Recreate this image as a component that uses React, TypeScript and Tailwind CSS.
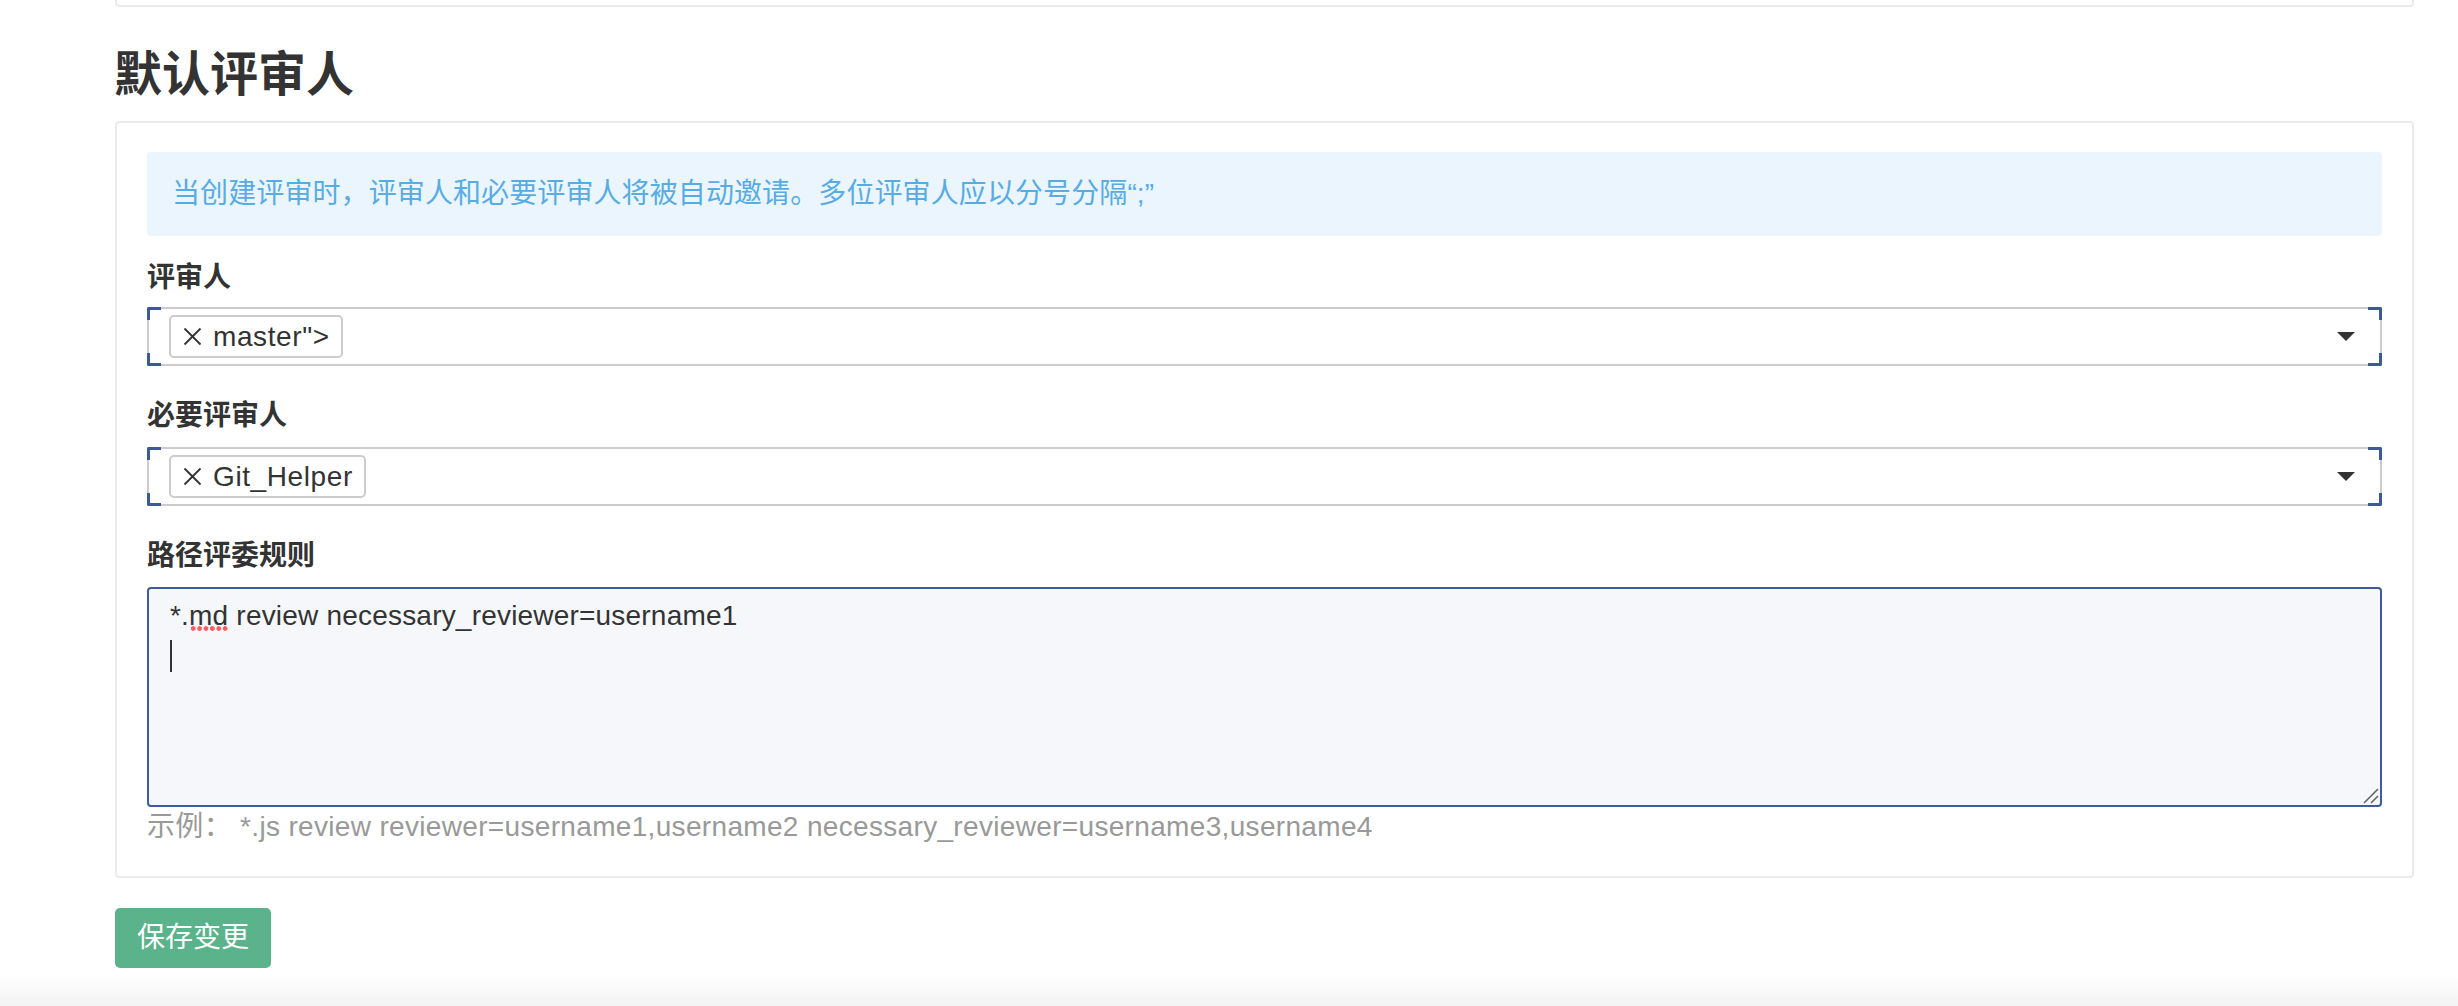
import React from 'react';

const Corners: React.FC = () => (
  <>
    <span className="absolute -left-[2px] -top-[2px] w-[14px] h-[13px] border-l-[3px] border-t-[3px] border-[#3d5a98] rounded-tl-[2px]" />
    <span className="absolute -left-[2px] -bottom-[2px] w-[14px] h-[13px] border-l-[3px] border-b-[3px] border-[#3d5a98] rounded-bl-[2px]" />
    <span className="absolute -right-[2px] -top-[2px] w-[14px] h-[13px] border-r-[3px] border-t-[3px] border-[#3d5a98] rounded-tr-[2px]" />
    <span className="absolute -right-[2px] -bottom-[2px] w-[14px] h-[13px] border-r-[3px] border-b-[3px] border-[#3d5a98] rounded-br-[2px]" />
  </>
);

const TagSelect: React.FC<{ value: string }> = ({ value }) => (
  <div className="relative h-[59px] border-2 border-[#cccccc] rounded-[2px] bg-white flex items-center pl-[20px]">
    <Corners />
    <span className="h-[43px] border-2 border-[#cccccc] rounded-[5px] bg-white flex items-center pl-[12px] pr-[11px] gap-[11px] text-[28px] tracking-[0.6px] text-[#333]">
      <svg width="19" height="19" viewBox="0 0 19 19" className="shrink-0">
        <path d="M1.5 1.5 L17.5 17.5 M17.5 1.5 L1.5 17.5" stroke="#333" strokeWidth="1.8" fill="none" />
      </svg>
      {value}
    </span>
    <svg width="18" height="9" viewBox="0 0 18 9" className="ml-auto mr-[25px]">
      <polygon points="0,0 18,0 9,9" fill="#333" />
    </svg>
  </div>
);

export default function App() {
  return (
    <div className="h-[1006px] overflow-hidden bg-white flex flex-col font-['Liberation_Sans','Noto_Sans_CJK_SC',sans-serif] text-[#333]">
      <div className="pl-[115px] pr-[44px]">
        {/* bottom of the previous panel */}
        <div className="h-[7px] border-x-2 border-b-2 border-[#ebebeb] rounded-b-[4px]" />

        <h3 className="mt-[41px] mb-[20px] text-[48px] leading-[53px] font-bold -ml-[1px]">默认评审人</h3>

        <div className="border-2 border-[#ebebeb] rounded-[4px] px-[30px] pt-[29px] pb-[29px]">
          <div className="h-[84px] bg-[#eaf5fe] rounded-[4px] pl-[25px] flex items-center text-[28px] tracking-[0.1px] text-[#58ace4] mb-[22px]">
            当创建评审时，评审人和必要评审人将被自动邀请。多位评审人应以分号分隔“;”
          </div>

          <div className="text-[28px] leading-[40px] font-bold mb-[9px]">评审人</div>
          <TagSelect value={'master">'} />

          <div className="mt-[30px] text-[28px] leading-[40px] font-bold mb-[11px]">必要评审人</div>
          <TagSelect value="Git_Helper" />

          <div className="mt-[30px] text-[28px] leading-[40px] font-bold mb-[11px]">路径评委规则</div>
          <div className="relative h-[220px] border-2 border-[#3e5c9a] rounded-[4px] bg-[#f5f7fa] pl-[21px] pt-[7px] text-[28px] leading-[40px] tracking-[0.2px] text-[#333]">
            <div>
              *.
              <span className="relative">
                md
                <span className="absolute left-[1px] right-0 bottom-0 h-[5px] bg-[radial-gradient(circle,#ff5c5c_2px,transparent_2.6px)] bg-[length:6.4px_5px]" />
              </span>{' '}
              review necessary_reviewer=username1
            </div>
            <div className="h-[40px] flex items-center">
              <span className="w-[2px] h-[32px] bg-[#333]" />
            </div>
            <svg width="16" height="16" viewBox="0 0 16 16" className="absolute right-[1px] bottom-[1px]">
              <path d="M1 15 L15 1 M8 15 L15 8" stroke="#666" strokeWidth="1.6" fill="none" />
            </svg>
          </div>
          <div className="text-[28px] leading-[40px] tracking-[0.33px] text-[#999]">
            示例： *.js review reviewer=username1,username2 necessary_reviewer=username3,username4
          </div>
        </div>

        <button className="mt-[30px] h-[60px] w-[156px] bg-[#5bb38b] rounded-[5px] text-white text-[28px] flex items-center justify-center">
          保存变更
        </button>
      </div>
      <div className="flex-1 mt-[6px] bg-linear-to-b from-white to-[#f3f3f3]" />
    </div>
  );
}
